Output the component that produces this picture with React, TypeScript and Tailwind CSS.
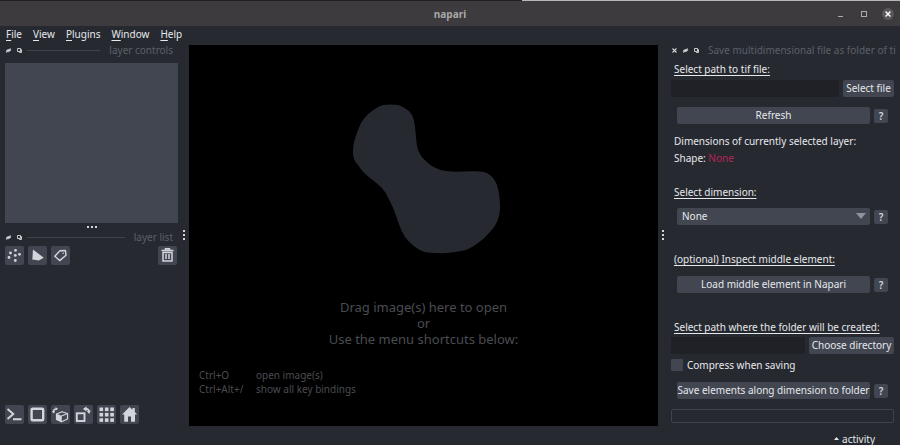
import type { ReactNode } from "react";

const iconButton =
  "flex h-[19px] w-[19px] items-center justify-center rounded-[2px] bg-[#414651] text-[#d2d5da]";
const panelButton =
  "h-[17px] whitespace-nowrap rounded-[2px] bg-[#414651] text-center leading-[17px]";
const sectionTitle = "px-[3px] leading-4 underline underline-offset-2";

function HideIcon() {
  return (
    <svg viewBox="0 0 7 7" className="h-[7px] w-[7px]" fill="none" stroke="#c8cbd0">
      <path d="M1 4.2C1.8 2.4 4.5 2 6 2.7C5.3 4.8 2.6 5.2 1 4.2Z" fill="#c8cbd0" strokeWidth=".5" />
      <path d="M1.2 6L5.7 1" strokeWidth=".7" />
    </svg>
  );
}

function FloatIcon() {
  return (
    <svg viewBox="0 0 7 7" className="h-[7px] w-[7px]" fill="none" stroke="#c8cbd0" strokeWidth="1">
      <path d="M1.500 1.500H4.500V4.500H1.500ZM3.500 4.500V5.500H5.500V2.500H4.500" />
    </svg>
  );
}

function DockControls() {
  return (
    <>
      <button type="button" aria-label="Hide panel"><HideIcon /></button>
      <button type="button" aria-label="Float panel"><FloatIcon /></button>
    </>
  );
}

function DockTitle({ children }: { children: ReactNode }) {
  return (
    <div className="flex h-[13px] items-center gap-1">
      <DockControls />
      <div className="h-px flex-1 bg-[#3e434c]" />
      <h2 className="px-[5px] leading-[13px] text-[#5a606b]">{children}</h2>
    </div>
  );
}

function Dots({ vertical = false }: { vertical?: boolean }) {
  return (
    <div className={vertical ? "flex flex-col gap-[2px]" : "flex gap-[2px]"}>
      <span className="h-[2px] w-[2px] bg-[#d2d5da]" />
      <span className="h-[2px] w-[2px] bg-[#d2d5da]" />
      <span className="h-[2px] w-[2px] bg-[#d2d5da]" />
    </div>
  );
}

function HelpButton() {
  return (
    <button type="button" aria-label="Help" className="h-[14px] w-[14px] rounded-[2px] bg-[#414651] text-center font-semibold leading-[14px] text-[#d2d5da]">
      ?
    </button>
  );
}

function PointsIcon() {
  return (
    <svg viewBox="0 0 19 19" className="h-[19px] w-[19px]" fill="currentColor">
      <circle cx="10.5" cy="4.3" r="1.4" /><circle cx="5.5" cy="7" r="1.4" />
      <circle cx="10.3" cy="9.4" r="1.4" /><circle cx="14.5" cy="8.3" r="1.4" />
      <circle cx="4" cy="11.5" r="1.4" /><circle cx="10.3" cy="14.5" r="1.4" />
    </svg>
  );
}

function ShapesIcon() {
  return (
    <svg viewBox="0 0 19 19" className="h-[19px] w-[19px]" fill="currentColor">
      <path d="M5 3.5L15.8 11.8L10.8 14.6L4.3 13.6Z" />
    </svg>
  );
}

function LabelsIcon() {
  return (
    <svg viewBox="0 0 19 19" className="h-[19px] w-[19px]" fill="none" stroke="currentColor" strokeWidth="1.4" strokeLinejoin="round">
      <path d="M9 4.8L14.4 4.5L15 9.2L8.7 14.6L3.8 10.2Z" />
      <circle cx="12.1" cy="7.3" r=".8" fill="currentColor" stroke="none" />
    </svg>
  );
}

function TrashIcon() {
  return (
    <svg viewBox="0 0 19 19" className="h-[19px] w-[19px]" fill="none" stroke="currentColor" strokeWidth="1.5">
      <path d="M3.5 4.5H15.5M7.5 4V2.8H11.5V4M5 6.5V15H14V6.5ZM8 8V13M11 8V13" />
    </svg>
  );
}

function ConsoleIcon() {
  return (
    <svg viewBox="0 0 19 19" className="h-[19px] w-[19px]" fill="none" stroke="currentColor" strokeWidth="1.9">
      <path d="M2.5 4L8.3 9L2.5 14M8 14.3H16.5" />
    </svg>
  );
}

function SquareIcon() {
  return (
    <svg viewBox="0 0 19 19" className="h-[19px] w-[19px]" fill="none" stroke="currentColor" strokeWidth="2.4">
      <rect x="3.600" y="3.800" width="11.600" height="11.400" rx="1" />
    </svg>
  );
}

function CubeIcon() {
  return (
    <svg viewBox="0 0 19 19" className="h-[19px] w-[19px]" fill="none" stroke="currentColor" strokeLinejoin="round">
      <path d="M5.5 9L11 6.8L16.5 8.5V14L10.5 16.8L5.5 14.4Z" strokeWidth="1.2" />
      <path d="M5.5 9L10.5 11V16.8L5.5 14.4Z" fill="currentColor" strokeWidth=".6" />
      <path d="M10.5 11L16.5 8.5" strokeWidth="1.2" />
      <path d="M2.5 7.5C2 5 3.5 3.8 6 4" strokeWidth="1.6" />
      <path d="M4.5 2L7 3.8L4.8 5.500ZM1 6L4.2 6.200L2.700 8.500Z" fill="currentColor" stroke="none" />
    </svg>
  );
}

function TransposeIcon() {
  return (
    <svg viewBox="0 0 19 19" className="h-[19px] w-[19px]" fill="none" stroke="currentColor">
      <rect x="2.8" y="8.3" width="7.7" height="7.7" strokeWidth="1.9" />
      <path d="M11.5 4C14 3.5 15 5 15 7" strokeWidth="1.8" />
      <path d="M12.5 1.2V6.5L9 4ZM12.8 6L16.8 5.5L15.2 9Z" fill="currentColor" stroke="none" />
    </svg>
  );
}

function GridIcon() {
  return (
    <svg viewBox="0 0 19 19" className="h-[19px] w-[19px]" fill="currentColor">
      {[2.5, 7.9, 13.3].map((y) =>
        [2.5, 7.9, 13.3].map((x) => <rect key={`${x}-${y}`} x={x} y={y} width="3.6" height="3.6" />),
      )}
    </svg>
  );
}

function HomeIcon() {
  return (
    <svg viewBox="0 0 19 19" className="h-[19px] w-[19px]" fill="currentColor">
      <path d="M9.5 2L12.5 4.8V3H14.8V7L17.2 9.6H15V16.8H11V11.5H8V16.8H4.2V9.6H2Z" />
    </svg>
  );
}

const menus = ["File", "View", "Plugins", "Window", "Help"];

const viewerButtons = [
  { label: "Console", icon: <ConsoleIcon /> },
  { label: "Toggle 2D/3D view", icon: <SquareIcon /> },
  { label: "Roll dimensions", icon: <CubeIcon /> },
  { label: "Transpose dimensions", icon: <TransposeIcon /> },
  { label: "Grid mode", icon: <GridIcon /> },
  { label: "Reset view", icon: <HomeIcon /> },
];

function TitleBar() {
  return (
    <header className="grid h-[25px] shrink-0 grid-cols-[1fr_auto_1fr] items-center bg-[#3d3b3d] px-[6px]">
      <h1 className="col-start-2 font-bold leading-4 text-[#aaa8a8]">napari</h1>
      <div className="flex items-center justify-end gap-3">
        <button type="button" aria-label="Minimize" className="flex h-3 w-3 items-end justify-center pb-[3px]">
          <span className="h-px w-[5px] bg-[#aaa8a8]" />
        </button>
        <button type="button" aria-label="Maximize" className="flex h-3 w-3 items-center justify-center">
          <span className="h-[6px] w-[6px] border border-[#aaa8a8]" />
        </button>
        <button type="button" aria-label="Close" className="flex h-3 w-3 items-center justify-center rounded-full bg-[#595759] text-white">
          <svg viewBox="0 0 12 12" className="h-3 w-3" stroke="currentColor" strokeWidth="1.4">
            <path d="M3.6 3.6L8.4 8.4M8.4 3.6L3.6 8.4" />
          </svg>
        </button>
      </div>
    </header>
  );
}

function LeftDock() {
  return (
    <aside className="flex w-[189px] shrink-0">
      <div className="flex min-w-0 flex-1 flex-col pb-[2px] pl-[5px]">
        <DockTitle>layer controls</DockTitle>
        <div className="mt-[6px] h-[160px] bg-[#414651]" />
        <div className="flex h-2 items-center justify-center"><Dots /></div>
        <DockTitle>layer list</DockTitle>
        <div className="mt-[2px] flex gap-1">
          <button type="button" aria-label="New points layer" className={iconButton}><PointsIcon /></button>
          <button type="button" aria-label="New shapes layer" className={iconButton}><ShapesIcon /></button>
          <button type="button" aria-label="New labels layer" className={iconButton}><LabelsIcon /></button>
          <button type="button" aria-label="Delete selected layers" className={`${iconButton} ml-auto mr-px`}><TrashIcon /></button>
        </div>
        <div className="mt-auto flex gap-1">
          {viewerButtons.map((b) => (
            <button key={b.label} type="button" aria-label={b.label} className={iconButton}>{b.icon}</button>
          ))}
        </div>
      </div>
      <div className="flex w-[11px] items-center justify-center"><Dots vertical /></div>
    </aside>
  );
}

function Canvas() {
  return (
    <main className="mt-px flex min-w-0 flex-1 flex-col bg-black text-[#4a4c52]">
      <svg viewBox="0 0 148 150" className="ml-[6px] mt-[59px] h-[150px] w-[148px] self-center" fill="#262930">
        <path d="M30 1C35 .3 41 .3 45 1C51 3 56 6 59 11C61 15 61.500 19 62 23C63 31 63 39 65 46C67 51 70 55 74 58C79 63 86 66 93 67C104 69 119 66 131 68C137 69.500 142 75 144 81C146.500 89 147 96 147 104C147 113 143 122 137 128C130 136 122 142 113 146C103 148.500 92 149.500 82 149C76 149 70 148 65 145C60 142 56 138 52 133C47 125 45 117 42 109C39 101 36 95 32 88C28 82 22 78 17 74C12 70 8 66 5 61C1 57 0 52 0 48C0 38 4 28 8 19C13 11 21 4 30 1Z" />
      </svg>
      <p className="mt-[45px] text-center text-[13px] leading-4">
        Drag image(s) here to open<br />or<br />Use the menu shortcuts below:
      </p>
      <dl className="mb-[30px] mt-auto grid grid-cols-[57px_1fr] px-[10px] leading-[14px]">
        <dt>Ctrl+O</dt><dd>open image(s)</dd>
        <dt>Ctrl+Alt+/</dt><dd>show all key bindings</dd>
      </dl>
    </main>
  );
}

function PluginDock() {
  return (
    <aside className="flex w-[242px] shrink-0">
      <div className="flex w-[10px] items-center justify-center"><Dots vertical /></div>
      <form className="flex min-w-0 flex-1 flex-col pl-[3px] pr-[6px]" onSubmit={(e) => e.preventDefault()}>
        <div className="-mr-1 flex h-[13px] items-center gap-1">
          <button type="button" aria-label="Close panel">
            <svg viewBox="0 0 7 7" className="h-[7px] w-[7px]" stroke="#d2d5da" strokeWidth="1.1"><path d="M1.500 1.500L5.500 5.500M5.500 1.500L1.500 5.500" /></svg>
          </button>
          <DockControls />
          <h2 className="ml-1 min-w-0 flex-1 overflow-hidden whitespace-nowrap leading-[13px] text-[#5a606b]">
            Save multidimensional file as folder of ti
          </h2>
        </div>

        <label htmlFor="tif" className={`${sectionTitle} mt-1`}>Select path to tif file:</label>
        <div className="mt-[3px] flex gap-1">
          <input id="tif" type="text" className="h-[17px] min-w-0 flex-1 rounded-[2px] bg-[#1f2126] px-1" />
          <button type="button" className={`${panelButton} w-[51px]`}>Select file</button>
        </div>
        <div className="mt-[10px] flex items-center gap-1 px-[6px]">
          <button type="button" className={`${panelButton} flex-1`}>Refresh</button>
          <HelpButton />
        </div>

        <p className="mt-[9px] px-[3px] leading-4">Dimensions of currently selected layer:</p>
        <p className="mt-px px-[3px] leading-4">Shape: <span className="text-[#b8245a]">None</span></p>

        <label htmlFor="dim" className={`${sectionTitle} mt-[18px]`}>Select dimension:</label>
        <div className="mt-[8px] flex items-center gap-1 px-[6px]">
          <div className="relative flex-1">
            <select id="dim" className="block h-[17px] w-full appearance-none rounded-[2px] bg-[#414651] px-[5px] leading-[17px]">
              <option>None</option>
            </select>
            <svg viewBox="0 0 10 6" className="pointer-events-none absolute right-1 top-[5px] h-[6px] w-[10px]" fill="#8d929b"><path d="M0 0H10L5 6Z" /></svg>
          </div>
          <HelpButton />
        </div>

        <p className={`${sectionTitle} mt-[26px]`}>(optional) Inspect middle element:</p>
        <div className="mt-[9px] flex items-center gap-1 px-[6px]">
          <button type="button" className={`${panelButton} flex-1`}>Load middle element in Napari</button>
          <HelpButton />
        </div>

        <label htmlFor="dir" className={`${sectionTitle} mt-[26px]`}>Select path where the folder will be created:</label>
        <div className="mt-[2px] flex gap-1">
          <input id="dir" type="text" className="h-[17px] min-w-0 flex-1 rounded-[2px] bg-[#1f2126] px-1" />
          <button type="button" className={`${panelButton} w-[85px]`}>Choose directory</button>
        </div>
        <label className="mt-[4px] flex h-[14px] items-center gap-1">
          <input type="checkbox" className="h-3 w-3 appearance-none rounded-[1px] bg-[#414651]" />
          Compress when saving
        </label>
        <div className="mt-[10px] flex items-center gap-1 px-[6px]">
          <button type="button" className={`${panelButton} flex-1`}>Save elements along dimension to folder</button>
          <HelpButton />
        </div>
        <div role="progressbar" aria-label="Save progress" className="mt-[10px] h-[14px] rounded-[2px] border border-[#3e434c]" />
      </form>
    </aside>
  );
}

export default function App() {
  return (
    <div className="flex h-screen flex-col overflow-hidden bg-[#262930] font-['Noto_Sans',sans-serif] text-[10px] text-[#e6e8ec]">
      <div className="flex h-px shrink-0">
        <div className="w-[58%] bg-[#202024]" />
        <div className="flex-1 bg-[#b4b8ba]" />
      </div>
      <TitleBar />
      <nav className="flex h-[18px] shrink-0 items-center gap-[11px] px-[6px] pb-[2px] leading-4">
        {menus.map((m) => (
          <button key={m} type="button"><span className="underline underline-offset-2">{m[0]}</span>{m.slice(1)}</button>
        ))}
      </nav>
      <div className="flex min-h-0 flex-1">
        <LeftDock />
        <Canvas />
        <PluginDock />
      </div>
      <footer className="flex h-[19px] shrink-0 items-center justify-end pr-[25px] pt-[6px] leading-3">
        <button type="button" className="flex items-center gap-[3px]">
          <svg viewBox="0 0 5 3" className="h-[3px] w-[5px]" fill="currentColor"><path d="M0 3L2.500 0L5 3Z" /></svg>
          activity
        </button>
      </footer>
    </div>
  );
}
